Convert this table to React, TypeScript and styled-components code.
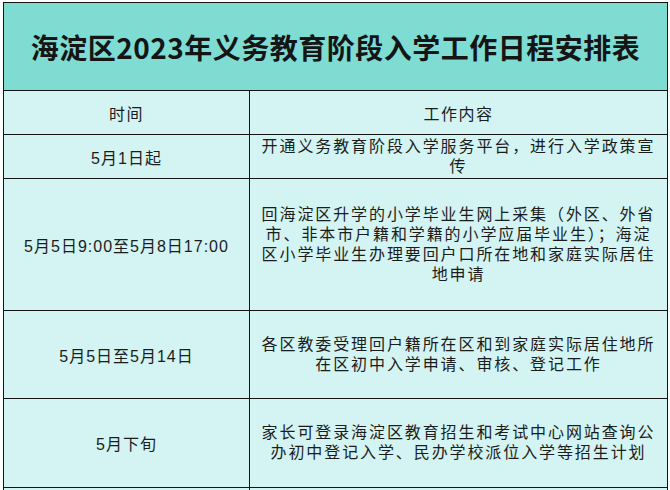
import React from "react";
import styled, { createGlobalStyle } from "styled-components";

type Row = {
  time: string;
  lines: string[];
  height: number;
};

const rows: Row[] = [
  {
    time: "5月1日起",
    lines: ["开通义务教育阶段入学服务平台，进行入学政策宣", "传"],
    height: 44,
  },
  {
    time: "5月5日9:00至5月8日17:00",
    lines: [
      "回海淀区升学的小学毕业生网上采集（外区、外省",
      "市、非本市户籍和学籍的小学应届毕业生）；海淀",
      "区小学毕业生办理要回户口所在地和家庭实际居住",
      "地申请",
    ],
    height: 132,
  },
  {
    time: "5月5日至5月14日",
    lines: ["各区教委受理回户籍所在区和到家庭实际居住地所", "在区初中入学申请、审核、登记工作"],
    height: 88,
  },
  {
    time: "5月下旬",
    lines: ["家长可登录海淀区教育招生和考试中心网站查询公", "办初中登记入学、民办学校派位入学等招生计划"],
    height: 89,
  },
  {
    time: "",
    lines: [""],
    height: 60,
  },
];

export default function App() {
  return (
    <>
      <GlobalStyle />
      <Page>
        <Table>
          <colgroup>
            <col style={{ width: 246 }} />
            <col />
          </colgroup>
          <tbody>
            <tr>
              <TitleCell colSpan={2}>海淀区2023年义务教育阶段入学工作日程安排表</TitleCell>
            </tr>
            <tr>
              <HeadCell>时间</HeadCell>
              <HeadCell>工作内容</HeadCell>
            </tr>
            {rows.map((row, i) => (
              <tr key={i} style={{ height: row.height }}>
                <TimeCell>{row.time}</TimeCell>
                <ContentCell>
                  {row.lines.map((line, j) => (
                    <Line key={j}>{line}</Line>
                  ))}
                </ContentCell>
              </tr>
            ))}
          </tbody>
        </Table>
      </Page>
    </>
  );
}

const GlobalStyle = createGlobalStyle`
  html, body {
    margin: 0;
    padding: 0;
    background: #ffffff;
    overflow: hidden;
  }
  body {
    font-family: "Liberation Sans", "Noto Sans CJK SC", sans-serif;
    color: #1c1c1c;
  }
`;

const Page = styled.div`
  padding: 2px 0 0 3px;
  width: 670px;
  height: 490px;
  box-sizing: border-box;
  overflow: hidden;
`;

const Table = styled.table`
  width: 665px;
  border-collapse: collapse;
  table-layout: fixed;
  background: #d3f4f2;

  td {
    border: 1.5px solid #141414;
    text-align: center;
    vertical-align: middle;
    padding: 0;
  }
`;

const TitleCell = styled.td`
  height: 87px;
  background: #7edcd3;
  font-family: "Noto Sans CJK SC", "Liberation Sans", sans-serif;
  font-weight: 700;
  font-size: 28px;
  letter-spacing: 0.5px;
  color: #151515;
`;

const HeadCell = styled.td`
  height: 43px;
  font-size: 16px;
  letter-spacing: 1.5px;
`;

const TimeCell = styled.td`
  font-size: 16px;
  letter-spacing: 1px;
`;

const ContentCell = styled.td`
  font-size: 16px;
  letter-spacing: 1.9px;
  line-height: 20px;
  padding: 0 6px !important;
`;

const Line = styled.div`
  white-space: nowrap;
`;
